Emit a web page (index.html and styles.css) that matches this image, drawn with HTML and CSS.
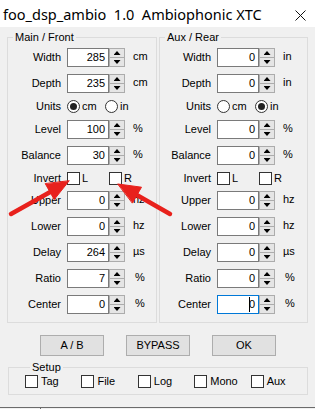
FILE: index.html
```html
<!DOCTYPE html>
<html>
<head>
<meta charset="utf-8">
<link rel="stylesheet" href="styles.css">
</head>
<body>
<div class="window">
  <div class="titlebar">
    <span class="title">foo_dsp_ambio  1.0  Ambiophonic XTC</span>
    <svg class="close" width="11" height="11" viewBox="0 0 11 11"><path d="M0.5 0.5 L10.5 10.5 M10.5 0.5 L0.5 10.5" stroke="#111" stroke-width="1"/></svg>
  </div>

  <div class="groups">
    <fieldset class="group left">
      <legend>Main / Front</legend>
      <div class="grid">
        <span class="lbl">Width</span>
        <div class="ctl"><div class="num">285</div><div class="spin"><span class="up"></span><span class="dn"></span></div></div>
        <span class="unit">cm</span>

        <span class="lbl">Depth</span>
        <div class="ctl"><div class="num">235</div><div class="spin"><span class="up"></span><span class="dn"></span></div></div>
        <span class="unit">cm</span>

        <span class="lbl">Units</span>
        <div class="opts">
          <span class="opt"><span class="radio on"></span>cm</span>
          <span class="opt"><span class="radio"></span>in</span>
        </div>

        <span class="lbl">Level</span>
        <div class="ctl"><div class="num">100</div><div class="spin"><span class="up"></span><span class="dn"></span></div></div>
        <span class="unit">%</span>

        <span class="lbl">Balance</span>
        <div class="ctl"><div class="num">30</div><div class="spin"><span class="up"></span><span class="dn"></span></div></div>
        <span class="unit">%</span>

        <span class="lbl">Invert</span>
        <div class="opts">
          <span class="opt wide"><span class="check"></span>L</span>
          <span class="opt wide"><span class="check"></span>R</span>
        </div>

        <span class="lbl">Upper</span>
        <div class="ctl"><div class="num">0</div><div class="spin"><span class="up"></span><span class="dn"></span></div></div>
        <span class="unit">hz</span>

        <span class="lbl">Lower</span>
        <div class="ctl"><div class="num">0</div><div class="spin"><span class="up"></span><span class="dn"></span></div></div>
        <span class="unit">hz</span>

        <span class="lbl">Delay</span>
        <div class="ctl"><div class="num">264</div><div class="spin"><span class="up"></span><span class="dn"></span></div></div>
        <span class="unit">µs</span>

        <span class="lbl">Ratio</span>
        <div class="ctl"><div class="num">7</div><div class="spin"><span class="up"></span><span class="dn"></span></div></div>
        <span class="unit shift">%</span>

        <span class="lbl">Center</span>
        <div class="ctl"><div class="num">0</div><div class="spin"><span class="up"></span><span class="dn"></span></div></div>
        <span class="unit shift">%</span>
      </div>
    </fieldset>

    <fieldset class="group right">
      <legend>Aux / Rear</legend>
      <div class="grid">
        <span class="lbl">Width</span>
        <div class="ctl"><div class="num">0</div><div class="spin"><span class="up"></span><span class="dn"></span></div></div>
        <span class="unit">in</span>

        <span class="lbl">Depth</span>
        <div class="ctl"><div class="num">0</div><div class="spin"><span class="up"></span><span class="dn"></span></div></div>
        <span class="unit">in</span>

        <span class="lbl">Units</span>
        <div class="opts">
          <span class="opt"><span class="radio"></span>cm</span>
          <span class="opt"><span class="radio on"></span>in</span>
        </div>

        <span class="lbl">Level</span>
        <div class="ctl"><div class="num">0</div><div class="spin"><span class="up"></span><span class="dn"></span></div></div>
        <span class="unit">%</span>

        <span class="lbl">Balance</span>
        <div class="ctl"><div class="num">0</div><div class="spin"><span class="up"></span><span class="dn"></span></div></div>
        <span class="unit">%</span>

        <span class="lbl">Invert</span>
        <div class="opts">
          <span class="opt wide"><span class="check"></span>L</span>
          <span class="opt wide"><span class="check"></span>R</span>
        </div>

        <span class="lbl">Upper</span>
        <div class="ctl"><div class="num">0</div><div class="spin"><span class="up"></span><span class="dn"></span></div></div>
        <span class="unit">hz</span>

        <span class="lbl">Lower</span>
        <div class="ctl"><div class="num">0</div><div class="spin"><span class="up"></span><span class="dn"></span></div></div>
        <span class="unit">hz</span>

        <span class="lbl">Delay</span>
        <div class="ctl"><div class="num">0</div><div class="spin"><span class="up"></span><span class="dn"></span></div></div>
        <span class="unit">µs</span>

        <span class="lbl">Ratio</span>
        <div class="ctl"><div class="num">0</div><div class="spin"><span class="up"></span><span class="dn"></span></div></div>
        <span class="unit shift">%</span>

        <span class="lbl">Center</span>
        <div class="ctl"><div class="num focus"><span class="caret"></span>0</div><div class="spin"><span class="up"></span><span class="dn"></span></div></div>
        <span class="unit shift">%</span>
      </div>
    </fieldset>
  </div>

  <div class="buttons">
    <div class="btn">A / B</div>
    <div class="btn">BYPASS</div>
    <div class="btn">OK</div>
  </div>

  <fieldset class="setup">
    <legend>Setup</legend>
    <div class="setup-row">
      <span class="sopt"><span class="check"></span>Tag</span>
      <span class="sopt"><span class="check"></span>File</span>
      <span class="sopt"><span class="check"></span>Log</span>
      <span class="sopt"><span class="check"></span>Mono</span>
      <span class="sopt"><span class="check"></span>Aux</span>
    </div>
  </fieldset>

  <div class="footer"><span class="tick"></span></div>

  <svg class="arrows" width="315" height="409" viewBox="0 0 315 409">
    <g fill="#e8211c" stroke="#e8211c" stroke-linecap="round">
      <line x1="11" y1="214" x2="52" y2="191" stroke-width="4.5"/>
      <polygon points="69,181 54.2,199.6 45.4,183.9" stroke-width="1" stroke-linejoin="round"/>
      <line x1="170" y1="214" x2="135" y2="194" stroke-width="4.5"/>
      <polygon points="118,184 141.5,187.2 132.5,202.8" stroke-width="1" stroke-linejoin="round"/>
    </g>
  </svg>
</div>
</body>
</html>
```

FILE: styles.css
```css
* { box-sizing: border-box; }

html, body {
  margin: 0;
  padding: 0;
}

body {
  width: 315px;
  height: 409px;
  overflow: hidden;
  background: #f0f0f0;
  font-family: "Liberation Sans", Arial, sans-serif;
  font-size: 11px;
  color: #000;
}

.window {
  position: relative;
  width: 315px;
  height: 409px;
  display: flex;
  flex-direction: column;
  background: #f0f0f0;
}

.titlebar {
  height: 27px;
  flex: none;
  background: #fff;
  display: flex;
  justify-content: space-between;
  align-items: flex-start;
  padding: 6px 9px 0 3px;
}

.title {
  font-family: "Noto Sans", "Open Sans", sans-serif;
  font-size: 14.5px;
  line-height: 16px;
  white-space: pre;
  color: #000;
}

.close {
  margin-top: 4px;
}

.groups {
  display: flex;
  gap: 2px;
  margin: 4px 0 0 7px;
}

fieldset {
  margin: 0;
  min-width: 0;
  border: 1px solid #dcdcdc;
}

legend {
  margin-left: 5px;
  padding: 0 2px;
  font-size: 11px;
  line-height: 13px;
  color: #000;
}

.group {
  padding: 4px 0 8px 0;
}

.group.left { width: 150px; }
.group.right { width: 149px; }

.grid {
  display: grid;
  grid-template-columns: 53px 58px auto;
  grid-template-rows: 19px 19px 13px 19px 19px 12px 19px 19px 19px 19px 19px;
  column-gap: 6px;
  row-gap: 7px;
}

.group.right .grid {
  grid-template-columns: 51px 58px auto;
}

.lbl {
  text-align: right;
  align-self: center;
  line-height: 13px;
  white-space: nowrap;
}

.ctl {
  display: flex;
  height: 19px;
}

.num {
  width: 42px;
  height: 19px;
  border: 1px solid #7a7a7a;
  background: #fff;
  text-align: right;
  padding-right: 3px;
  line-height: 17px;
}

.num.focus {
  border-color: #0078d7;
  display: flex;
  justify-content: flex-end;
  align-items: center;
}

.caret {
  display: inline-block;
  width: 1px;
  height: 15px;
  background: #000;
  margin-right: -1px;
}

.spin {
  width: 16px;
  height: 19px;
  border: 1px solid #acacac;
  background: #e5e5e5;
  display: flex;
  flex-direction: column;
}

.spin .up,
.spin .dn {
  flex: 1;
  display: flex;
  align-items: center;
  justify-content: center;
}

.spin .up {
  border-bottom: 1px solid #acacac;
}

.spin .up::before,
.spin .dn::before {
  content: "";
  width: 7px;
  height: 4px;
  background: #000;
}

.spin .up::before {
  clip-path: polygon(50% 0, 100% 100%, 0 100%);
}

.spin .dn::before {
  clip-path: polygon(0 0, 100% 0, 50% 100%);
}

.unit {
  align-self: start;
  padding-top: 2px;
  margin-left: 2px;
  line-height: 13px;
}

.unit.shift {
  margin-left: 4px;
}

.opts {
  grid-column: 2 / 4;
  display: flex;
  align-items: center;
  height: 13px;
}

.opt {
  width: 38px;
  display: flex;
  align-items: center;
  gap: 2px;
  line-height: 13px;
}

.opt.wide {
  width: 42px;
}

.radio {
  width: 13px;
  height: 13px;
  flex: none;
  border-radius: 50%;
  border: 1px solid #333;
  background: #fff;
  display: flex;
  align-items: center;
  justify-content: center;
}

.radio.on::before {
  content: "";
  width: 7px;
  height: 7px;
  border-radius: 50%;
  background: #222;
}

.check {
  width: 13px;
  height: 13px;
  flex: none;
  border: 1px solid #333;
  background: #fff;
}

.buttons {
  display: flex;
  gap: 22px;
  margin: 12px 0 0 40px;
}

.btn {
  width: 64px;
  height: 21px;
  border: 1px solid #adadad;
  background: #e1e1e1;
  text-align: center;
  line-height: 19px;
  white-space: pre;
}

.setup {
  width: 300px;
  margin: 5px 0 0 8px;
  padding: 1px 0 6px 16px;
}

.setup-row {
  display: flex;
  height: 13px;
}

.sopt {
  width: 57px;
  display: flex;
  align-items: center;
  gap: 3px;
  line-height: 13px;
}

.footer {
  margin-top: auto;
  height: 2px;
  border-top: 1px solid #6b6b6b;
  padding-left: 40px;
}

.tick {
  display: block;
  width: 1px;
  height: 1px;
  background: #6b6b6b;
}

.arrows {
  position: absolute;
  left: 0;
  top: 0;
  pointer-events: none;
}
```
